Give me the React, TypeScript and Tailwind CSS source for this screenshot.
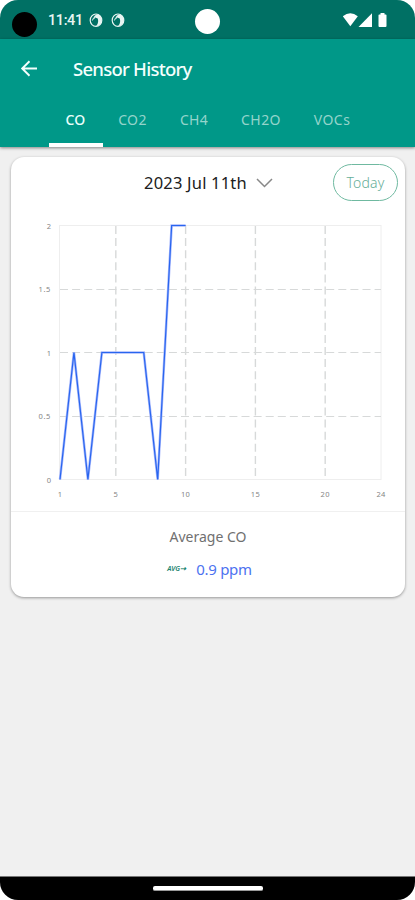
import React from 'react';

const tabs = [
  { name: 'CO', box: 'w-[54px]', text: 'tracking-[0.2px]' },
  { name: 'CO2', box: 'w-[60px]', text: 'tracking-[0.4px]' },
  { name: 'CH4', box: 'w-[63px]', text: 'tracking-[0.3px]' },
  { name: 'CH2O', box: 'w-[71px]', text: 'tracking-[0.4px]' },
  { name: 'VOCs', box: 'w-[71px]', text: 'tracking-[0.5px]' },
];

const readings = [0, 1, 0, 1, 1, 1, 1, 0, 2, 2];
const xOf = (hour: number) => 49 + (hour - 1) * 13.957;
const yOf = (value: number) => 270.5 - value * 127;

function NotifyIcon() {
  return (
    <svg className="h-[15px] w-[14px]" viewBox="0 0 14 15" fill="none">
      <ellipse cx="7" cy="7.2" rx="5.8" ry="6.2" stroke="#e8f5f3" strokeWidth="1.2" />
      <path d="M7.500 1.500C14.500 2 14.500 12.500 7 13.200 9.200 11 9.600 7.800 8.700 5.500L6.300 4.500 4.800 6.500 5.300 3z" fill="#e8f5f3" />
      <path d="M4.800 4.500 3.400 7.500" stroke="#e8f5f3" strokeWidth="1" />
    </svg>
  );
}

function StatusBar() {
  return (
    <div className="flex h-[39px] items-start bg-[#007064] pl-3">
      <div className="mt-[12px] h-[25px] w-[25px] shrink-0 rounded-full bg-black" />
      <span className="ml-[11px] mt-[11px] w-[35px] whitespace-nowrap font-['Roboto'] text-[14.5px] font-medium leading-[20px] tracking-[-0.4px] text-[#e8f5f3]">11:41</span>
      <div className="ml-[6px] mt-[13px] flex gap-2"><NotifyIcon /><NotifyIcon /></div>
      <div className="ml-[70px] mt-[9px] h-[25px] w-[25px] shrink-0 rounded-full bg-white" />
      <svg className="ml-[122px] mt-[12px] h-4 w-[46px]" viewBox="0 0 46 16" fill="#fff">
        <path d="M.8 4.200Q8.300-1.800 15.800 4.200L8.300 14.200z" />
        <path d="M30 1.200V15H16.500z" />
        <path d="M38.500 1h4v1.500h1.200q.8 0 .8.800v10.700q0 1-1 1h-6q-1 0-1-1V3.300q0-.8.800-.8h1.200z" />
      </svg>
    </div>
  );
}

function Header() {
  return (
    <header className="relative h-[108px] bg-[#009888] shadow-[0_1px_3px_rgba(0,0,0,0.45)]">
      <div className="flex h-[60px] items-center pl-[20px]">
        <svg className="h-[18px] w-[18px]" viewBox="0 0 18 18" fill="none" stroke="#f4fffd" strokeWidth="1.9">
          <path d="M17 8.500H2M9.500 1.300 2.200 8.500l7.300 7.200" />
        </svg>
        <h1 className="ml-[35px] whitespace-nowrap text-[18.500px] font-medium leading-6 tracking-[-0.75px] text-[#f4fffd]">Sensor History</h1>
      </div>
      <nav className="flex h-[48px] pl-[49px]">
        {tabs.map((tab, i) => (
          <div key={tab.name} className={`flex flex-col items-center ${tab.box}`}>
            <span className={`-ml-[1px] mt-[11px] h-[33px] text-[14px] leading-5 ${tab.text} ${i === 0 ? 'font-medium text-[#eafffc]' : 'text-[#94d4cb]'}`}>{tab.name}</span>
            {i === 0 && <div className="h-1 w-full bg-white" />}
          </div>
        ))}
      </nav>
    </header>
  );
}

function Chart() {
  const points = readings.map((v, i) => `${xOf(i + 1)},${yOf(v)}`).join(' ');
  return (
    <svg className="block h-[302px] w-[394px]" viewBox="0 0 394 302">
      <rect x="48.500" y="16.500" width="321.500" height="254" fill="none" stroke="#eeeeee" />
      <g stroke="#d7d9d9" strokeDasharray="8 4.100">
        {[5, 10, 15, 20].map(h => <line key={h} x1={xOf(h)} x2={xOf(h)} y1="17" y2="270" strokeWidth="1.400" />)}
        {[0.5, 1, 1.5].map(v => <line key={v} x1="49" x2="370" y1={Math.floor(yOf(v)) + 0.5} y2={Math.floor(yOf(v)) + 0.5} strokeWidth="1.200" />)}
      </g>
      <polyline points={points} fill="none" stroke="#a9b9fc" strokeWidth="2.500" />
      <polyline points={points} fill="none" stroke="#2865ef" strokeWidth="1.200" />
      <g fill="#858585" fontSize="7.500">
        {[0, 0.5, 1, 1.5, 2].map(v => <text key={v} x="40" y={yOf(v) + 3} textAnchor="end" letterSpacing={v % 1 ? 0.6 : 0}>{v}</text>)}
        {[1, 5, 10, 15, 20, 24].map(h => <text key={h} x={xOf(h)} y="287.500" textAnchor="middle" letterSpacing="0.3">{h}</text>)}
      </g>
    </svg>
  );
}

export default function App() {
  return (
    <div className="h-[900px] w-[415px] bg-white font-['Noto_Sans','Open_Sans',sans-serif]">
      <div className="flex h-full flex-col overflow-hidden rounded-[18px] bg-[#f0f0f0]">
        <StatusBar />
        <Header />
        <main className="flex-1 px-[11px] pt-[10px]">
          <section className="h-[440px] w-[394px] overflow-hidden rounded-[13px] bg-white shadow-[0_1px_3px_rgba(0,0,0,0.38)]">
            <div className="flex h-[52px] items-center pl-[133px]">
              <span className="w-[103px] whitespace-nowrap text-[16.500px] tracking-[0.2px] text-[#202020]">2023 Jul 11th</span>
              <svg className="ml-[9px] -mt-[1px] h-[10px] w-[17px]" viewBox="0 0 17 10" fill="none" stroke="#888" strokeWidth="1.500"><path d="m1 1 7.500 7.500L16 1" /></svg>
              <button className="ml-[60px] -mt-[2px] h-[37px] w-[65px] rounded-full border border-[#6fb9a0] text-[14px] font-light tracking-[0.2px] text-[#65ae98]">Today</button>
            </div>
            <Chart />
            <div className="flex h-[86px] flex-col items-center border-t border-[#f0f0f0]">
              <p className="mt-[15px] text-[14px] leading-5 text-[#707070]">Average CO</p>
              <div className="ml-[3px] mt-[12px] flex h-5 items-center">
                <span className="w-[21px] whitespace-nowrap text-[7px] font-semibold italic tracking-[-0.1px] text-[#19836d]">AVG⇢</span>
                <span className="ml-[8px] whitespace-nowrap text-[15px] leading-5 tracking-[-0.3px] text-[#4c72f0]">0.9 ppm</span>
              </div>
            </div>
          </section>
        </main>
        <footer className="flex h-[24px] justify-center border-t border-[#777] bg-black pt-[9px]">
          <div className="h-[5px] w-[110px] rounded-[2px] border-b border-[#999] bg-white" />
        </footer>
      </div>
    </div>
  );
}
